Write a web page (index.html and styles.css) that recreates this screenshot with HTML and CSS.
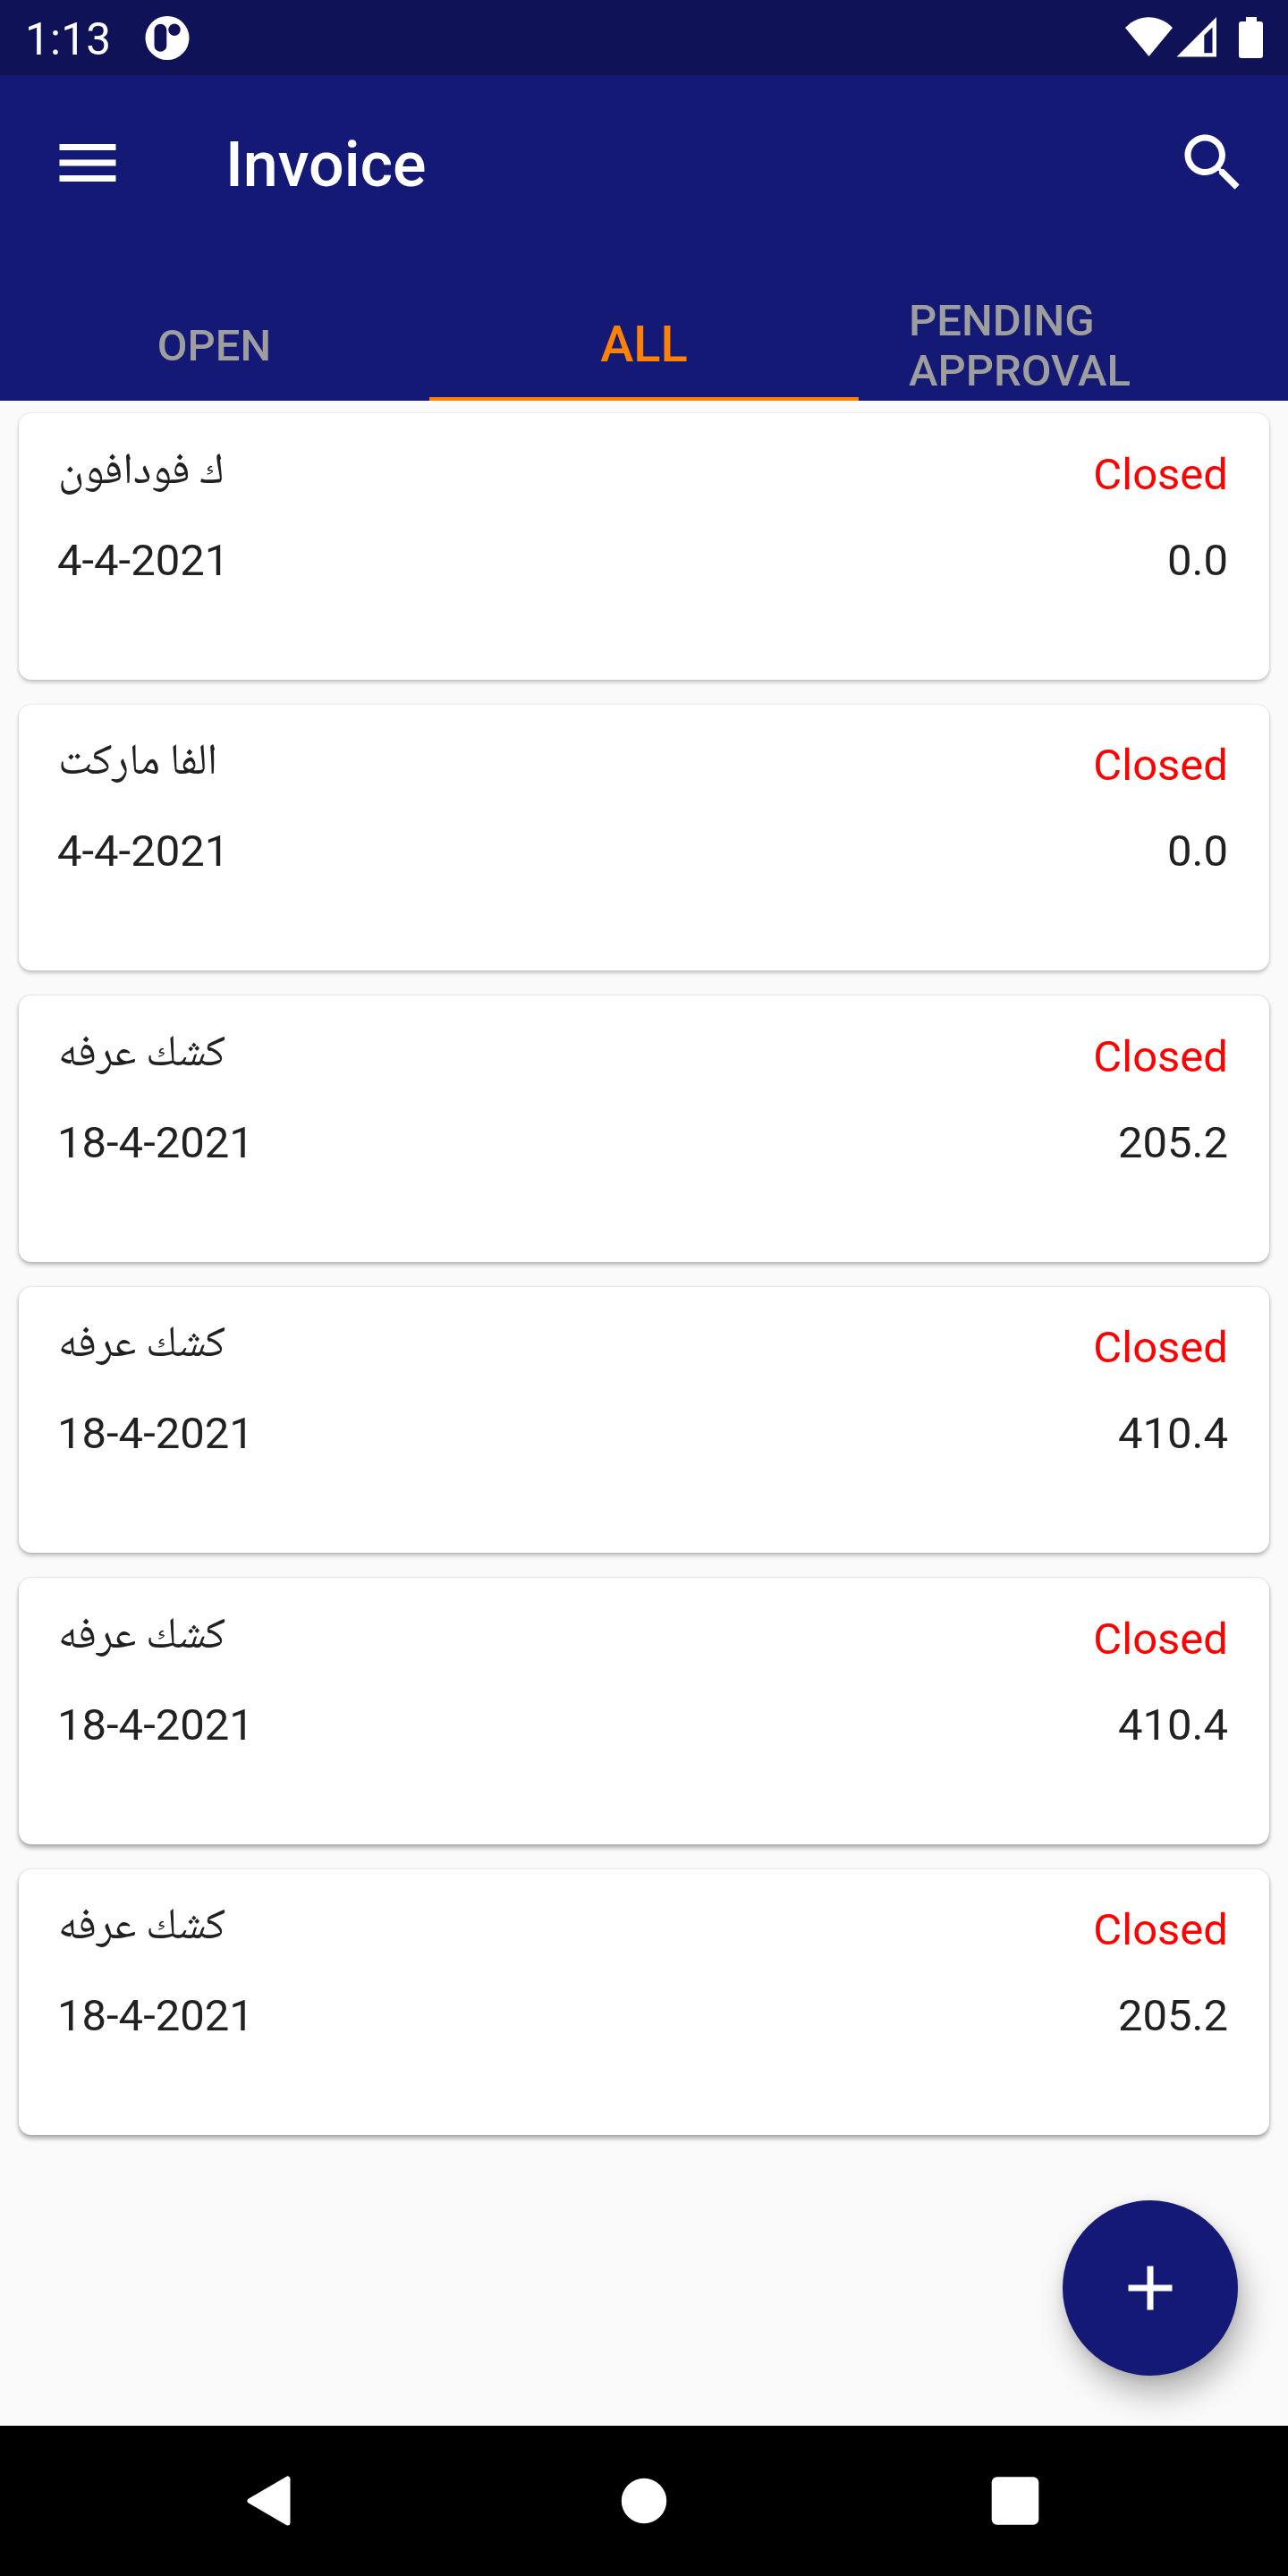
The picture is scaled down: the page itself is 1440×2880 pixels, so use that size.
FILE: index.html
```html
<!DOCTYPE html>
<html lang="en">
<head>
<meta charset="utf-8">
<title>Invoice</title>
<link rel="stylesheet" href="styles.css">
</head>
<body>
<div class="phone">
  <div class="status">
    <span class="clock">1:13</span>
    <svg class="app-badge" viewBox="0 0 50 50"><circle cx="25" cy="25.500" r="24.500" fill="#fff"/><rect x="10.500" y="9.800" width="13.800" height="31" rx="6.900" fill="#0f1256"/><circle cx="33" cy="16.300" r="6.700" fill="#0f1256"/></svg>
    <svg class="indicators" viewBox="0 0 156 50" fill="#fff"><path d="M0 14C15 -1.700 37.500 -1.700 53 14L26.500 46Z"/><path fill-rule="evenodd" d="M102 2V46.500H57.500ZM97.500 13.500L88.300 22.500V42.300H97.500Z"/><path d="M135 2h12v5h4a3 3 0 0 1 3 3v35a3 3 0 0 1-3 3h-21a3 3 0 0 1-3-3v-35a3 3 0 0 1 3-3h5Z"/></svg>
  </div>
  <header class="toolbar">
    <svg class="icon" viewBox="0 0 24 24"><path d="M3 18h18v-2H3v2zm0-5h18v-2H3v2zm0-7v2h18V6H3z"/></svg>
    <h1 class="title">Invoice</h1>
    <svg class="icon" viewBox="0 0 24 24"><path d="M15.500 14h-.79l-.28-.27C15.410 12.590 16 11.110 16 9.500 16 5.910 13.090 3 9.500 3S3 5.910 3 9.500 5.910 16 9.500 16c1.610 0 3.090-.59 4.230-1.570l.27.28v.79l5 4.990L20.490 19l-4.990-5zm-6 0C7.010 14 5 11.990 5 9.500S7.010 5 9.500 5 14 7.010 14 9.500 11.990 14 9.500 14z"/></svg>
  </header>
  <nav class="tabs">
    <div class="tab">OPEN</div>
    <div class="tab active">ALL</div>
    <div class="tab">PENDING APPROVAL</div>
  </nav>
  <main class="list">
    <article class="card"><div class="row first"><span class="name" dir="rtl">ك فودافون</span><span class="state">Closed</span></div><div class="row"><span>4-4-2021</span><span>0.0</span></div></article>
    <article class="card"><div class="row first"><span class="name" dir="rtl">الفا ماركت</span><span class="state">Closed</span></div><div class="row"><span>4-4-2021</span><span>0.0</span></div></article>
    <article class="card"><div class="row first"><span class="name" dir="rtl">كشك عرفه</span><span class="state">Closed</span></div><div class="row"><span>18-4-2021</span><span>205.2</span></div></article>
    <article class="card"><div class="row first"><span class="name" dir="rtl">كشك عرفه</span><span class="state">Closed</span></div><div class="row"><span>18-4-2021</span><span>410.4</span></div></article>
    <article class="card"><div class="row first"><span class="name" dir="rtl">كشك عرفه</span><span class="state">Closed</span></div><div class="row"><span>18-4-2021</span><span>410.4</span></div></article>
    <article class="card"><div class="row first"><span class="name" dir="rtl">كشك عرفه</span><span class="state">Closed</span></div><div class="row"><span>18-4-2021</span><span>205.2</span></div></article>
    <button class="fab" aria-label="Add"><svg class="icon" viewBox="0 0 24 24"><path d="M19 13h-6v6h-2v-6H5v-2h6V5h2v6h6v2z"/></svg></button>
  </main>
  <footer class="sysnav">
    <svg viewBox="0 0 60 60"><path d="M46.500 5.500V54.500L4.500 30Z" stroke="#fff" stroke-width="6" stroke-linejoin="round"/></svg>
    <svg viewBox="0 0 60 60"><circle cx="30" cy="30" r="25.200"/></svg>
    <svg viewBox="0 0 60 60"><rect x="3.700" y="3.300" width="52.600" height="53.400" rx="6"/></svg>
  </footer>
</div>
</body>
</html>
```
FILE: styles.css
```css
* { box-sizing: border-box; }
body { margin: 0; background: #fafafa; font-family: Roboto, sans-serif; }
.phone { width: 1440px; height: 2880px; display: flex; flex-direction: column; overflow: hidden; }
svg { display: block; flex: none; }
.status { height: 84px; background: #0f1256; display: flex; align-items: center; padding: 0 26px 0 27px; color: #fff; }
.clock { font-size: 49.500px; line-height: 56px; width: 135px; padding: 4px 0 0 1px; letter-spacing: 0.200px; }
.app-badge { width: 50px; height: 50px; }
.indicators { width: 156px; height: 50px; margin-left: auto; }
.toolbar { height: 196px; background: #141975; display: flex; align-items: center; padding: 0 42px 0 56px; color: #fff; }
.icon { width: 84px; height: 84px; fill: #fff; }
.title { margin: 0 auto 0 112px; padding-top: 4px; font-size: 70px; font-weight: 500; line-height: 82px; }
.tabs { height: 168px; background: #141975; display: grid; grid-template-columns: repeat(3, 1fr); color: #9e9e9e; font-size: 49px; font-weight: 500; line-height: 56px; }
.tab { display: flex; align-items: center; justify-content: center; padding: 49px 56px 0; border-bottom: 4px solid transparent; }
.tab:first-child { padding-right: 57px; }
.tab.active { color: #ff8208; border-bottom-color: #ff8208; font-size: 56px; padding-top: 46px; }
.list { flex: 1; position: relative; background: #fafafa; padding: 14px 21px; display: flex; flex-direction: column; gap: 28px; font-size: 49px; line-height: 58px; color: #212121; }
.card { height: 297.5px; flex: none; background: #fff; border-radius: 14px; padding: 39.800px 46px 0 43px; box-shadow: 0 3px 4px rgba(0,0,0,.2), 0 0 3px rgba(0,0,0,.12); }
.card:nth-child(even) { padding-top: 39.400px; }
.card:nth-child(n+3) { box-shadow: 0 3px 5px rgba(0,0,0,.26), 0 0 3px rgba(0,0,0,.14); }
.card:nth-child(n+5) { box-shadow: 0 4px 5px rgba(0,0,0,.3), 0 0 3px rgba(0,0,0,.16); }
.row { display: flex; justify-content: space-between; }
.row.first { height: 96px; }
.name { padding-left: 1px; font-family: "Noto Naskh Arabic", "Noto Sans Arabic", "Noto Sans", "DejaVu Sans", sans-serif; line-height: 56px; }
.state { color: #ff0000; }
.fab { position: absolute; right: 56px; bottom: 56px; width: 196px; height: 196px; border: 0; padding: 0; border-radius: 50%; background: #141975; display: flex; align-items: center; justify-content: center; box-shadow: 7px 21px 35px rgba(0,0,0,.28), 0 3px 12px rgba(0,0,0,.1); }
.sysnav { height: 168px; background: #000; display: flex; align-items: center; justify-content: space-between; padding: 0 275px; fill: #fff; }
.sysnav svg { width: 60px; height: 60px; }
```
